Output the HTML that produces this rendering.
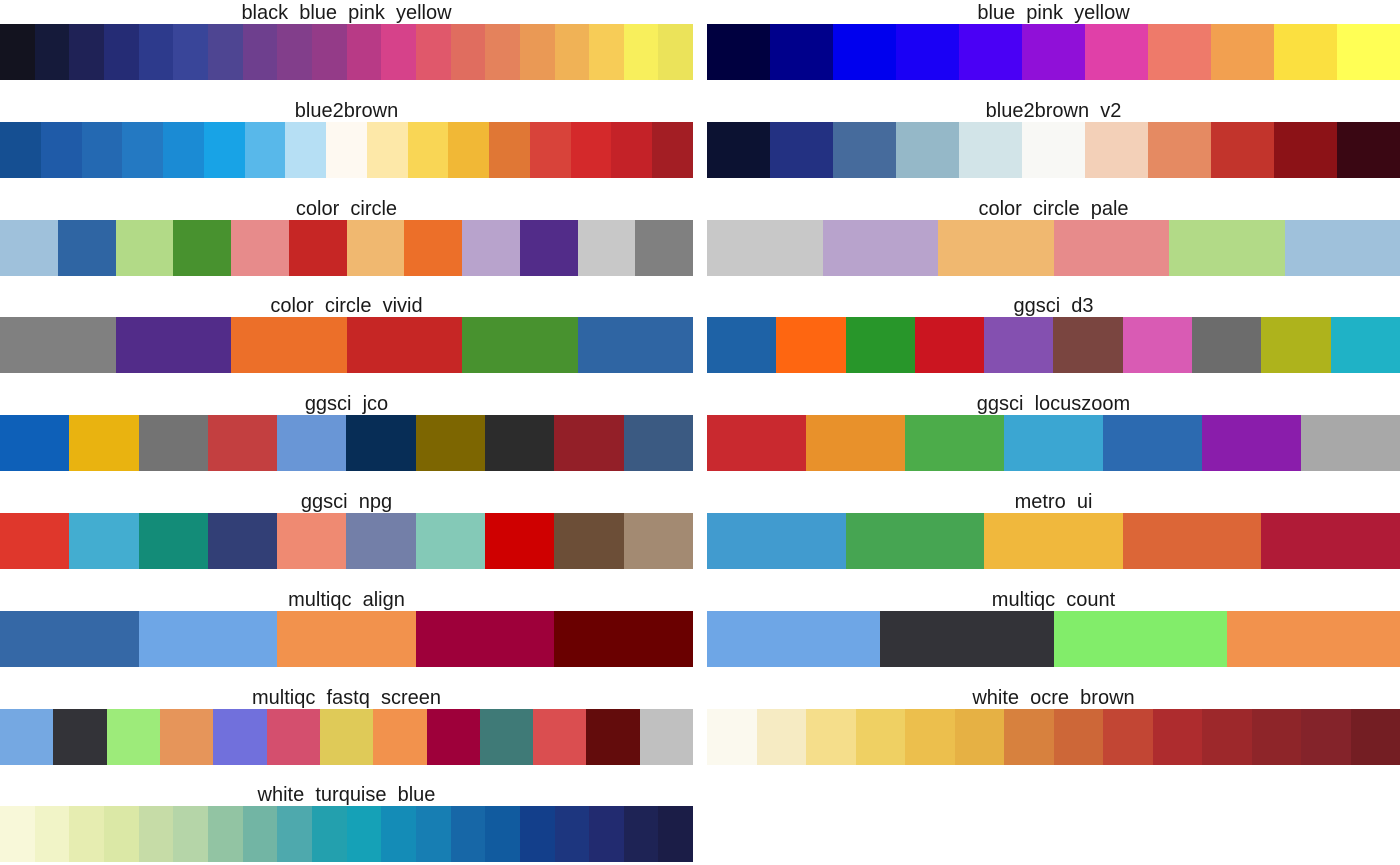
<!DOCTYPE html>
<html><head><meta charset="utf-8"><style>
body{margin:0;width:1400px;height:865px;background:#fff;position:relative;overflow:hidden;font-family:"Liberation Sans",Arial,sans-serif}
.p{position:absolute;width:693px}
.p.r{left:707px}.p.l{left:0}
.t{height:22px;line-height:22px;text-align:center;font-size:20px;color:#1a1a1a;white-space:pre;position:relative;top:2px}
.b{display:flex;height:56px;margin-top:2px;position:relative;z-index:1}
.b div{flex:1}
</style></head><body>
<div id="c"></div>
<script>
const P=[
["black  blue  pink  yellow","#13131f #151a3a #1f2256 #252c75 #2d3a8c #394599 #4e4592 #6e3f8e #823e8b #943b88 #b83a86 #d6428a #e0586b #e06d5f #e4825c #ea9955 #f0b256 #f7cc57 #f8ef5c #ebe35a"],
["blue  pink  yellow","#000040 #00008b #0000ee #1a00f5 #4a00f5 #9010d8 #e040a8 #ee7a6a #f2a050 #fbe040 #ffff55"],
["blue2brown","#154f92 #1f5ba8 #2469b2 #2479c2 #1b8bd4 #18a3e6 #58b8ea #b6dff4 #fef9f1 #fde8a8 #f9d655 #f1b836 #e07735 #d8433a #d4292b #c42228 #a31e24"],
["blue2brown  v2","#0c1232 #233182 #466b9c #95b8c8 #d2e4e8 #f8f8f5 #f3d0b8 #e58a62 #c2342c #8c1217 #3a0713"],
["color  circle","#9fc1db #2f65a3 #b2da87 #48922f #e78b8b #c62625 #f0b870 #ec6f29 #b8a3cc #522c89 #c8c8c8 #808080"],
["color  circle  pale","#c8c8c8 #b8a3cc #f0b870 #e78b8b #b2da87 #9fc1db"],
["color  circle  vivid","#808080 #522c89 #ec6f29 #c62625 #48922f #2f65a3"],
["ggsci  d3","#1e62a6 #fe6611 #28962a #cb1520 #8450b0 #7a4540 #d95bb4 #6c6c6c #aeb31c #1fb2c6"],
["ggsci  jco","#0e60b8 #e9b310 #737373 #c33f40 #6996d6 #072d56 #7d6601 #2c2c2c #931f28 #3b5a82"],
["ggsci  locuszoom","#c9292f #e8912b #4cac4a #3ba6d2 #2c6ab0 #8a1dab #a8a8a8"],
["ggsci  npg","#df372c #43add0 #138c78 #323f76 #ef8a72 #737fa8 #84c9b7 #cf0000 #6c4e37 #a38a72"],
["metro  ui","#419bcf #46a552 #f0b83d #dc6637 #b01b37"],
["multiqc  align","#3568a6 #6ea6e6 #f2924d #9e003a #6a0000"],
["multiqc  count","#6ea6e6 #333338 #82ed6a #f2924d"],
["multiqc  fastq  screen","#75a8e2 #333338 #9deb7a #e6955a #7170dc #d44f6e #dfca58 #f2924d #9e003a #3f7a77 #da4e50 #630c0c #c0c0c0"],
["white  ocre  brown","#fbf9ee #f6ebc3 #f5de8b #efd063 #ecbf4d #e6b144 #d7813e #cd6738 #c24634 #ae2c2e #9d282b #8e2529 #84232a #741e23"],
["white  turquise  blue","#f8f8d9 #f1f4c7 #e6edb1 #dbe8a6 #c6dca7 #b5d5a8 #92c4a3 #72b5a4 #4ea9ad #23a0ae #15a1b7 #148cb7 #177eb3 #1767a7 #115b9f #133f8b #1d367f #222b70 #1e2355 #1b1d47"]];
let h="";
P.forEach((p,i)=>{const row=Math.floor(i/2),top=Math.round(row*97.8);
h+=`<div class="p ${i%2?'r':'l'}" style="top:${top}px"><div class="t">${p[0]}</div><div class="b">${p[1].split(' ').map(c=>`<div style="background:${c}"></div>`).join('')}</div></div>`;});
document.getElementById('c').innerHTML=h;
</script>
</body></html>
